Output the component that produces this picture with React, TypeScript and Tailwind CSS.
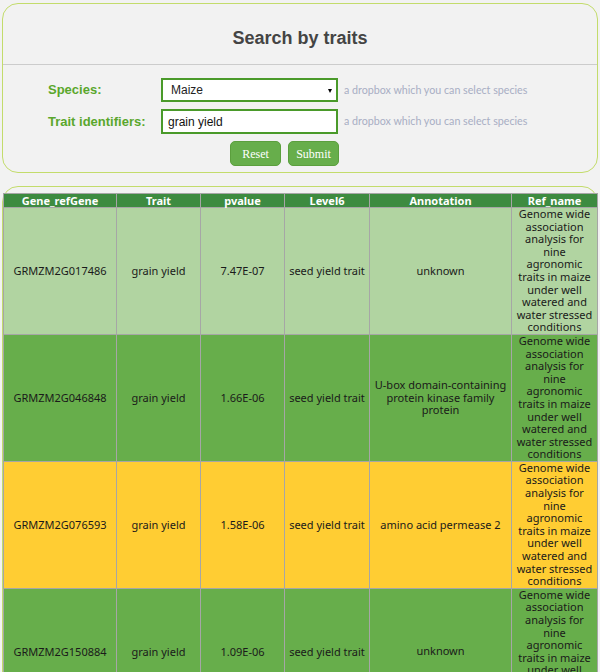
import React from 'react'

const refName = 'Genome wide association analysis for nine agronomic traits in maize under well watered and water stressed conditions'

const rows = [
  { gene: 'GRMZM2G017486', trait: 'grain yield', p: '7.47E-07', level: 'seed yield trait', ann: 'unknown', bg: 'bg-[#b1d4a1]' },
  { gene: 'GRMZM2G046848', trait: 'grain yield', p: '1.66E-06', level: 'seed yield trait', ann: 'U-box domain-containing protein kinase family protein', bg: 'bg-[#67ae4b]' },
  { gene: 'GRMZM2G076593', trait: 'grain yield', p: '1.58E-06', level: 'seed yield trait', ann: 'amino acid permease 2', bg: 'bg-[#ffcd33]' },
  { gene: 'GRMZM2G150884', trait: 'grain yield', p: '1.09E-06', level: 'seed yield trait', ann: 'unknown', bg: 'bg-[#67ae4b]' },
]

const heads = ['Gene_refGene', 'Trait', 'pvalue', 'Level6', 'Annotation', 'Ref_name']
const widths = ['w-[113px]', 'w-[84px]', 'w-[84px]', 'w-[85px]', 'w-[142px]', 'w-[86px]']

export default function App() {
  return (
    <div className="min-h-screen bg-[#f2f2f2] pt-[3px] px-[2px] font-['Liberation_Sans',Arial,sans-serif]">
      {/* search panel */}
      <div className="h-[170px] rounded-[16px] border border-[#c3dc6b] bg-[#f2f2f2]">
        <div className="h-[61px] border-b border-[#cccccc] flex items-center justify-center">
          <h1 className="text-[18px] font-bold text-[#444444] mt-[9px]">Search by traits</h1>
        </div>
        <div className="pt-[13px]">
          <div className="flex items-center h-[24px]">
            <div className="w-[158px] pl-[45px] text-[13px] font-bold text-[#5aa72c]">Species:</div>
            <div className="relative w-[177px] h-[24px] border-2 border-[#4a9a2a] bg-white flex items-center pl-[8px] text-[12px] text-[#222]">
              Maize
              <span className="absolute right-[4px] top-[9px] w-0 h-0 border-l-[2.5px] border-r-[2.5px] border-t-[4px] border-l-transparent border-r-transparent border-t-black" />
            </div>
            <span className="ml-[6px] text-[10.7px] text-[#a8aec4] font-['Lato',sans-serif]">a dropbox which you can select species</span>
          </div>
          <div className="flex items-center h-[25px] mt-[7px]">
            <div className="w-[158px] pl-[45px] text-[13px] font-bold text-[#5aa72c]">Trait identifiers:</div>
            <div className="w-[177px] h-[25px] border-2 border-[#4a9a2a] bg-white flex items-center pl-[5px] text-[12px] text-[#111]">
              grain yield
            </div>
            <span className="ml-[6px] text-[10.7px] text-[#a8aec4] font-['Lato',sans-serif]">a dropbox which you can select species</span>
          </div>
          <div className="flex gap-[7px] pl-[227px] mt-[7px]">
            <button className="w-[51px] h-[25px] rounded-[5px] border border-[#5b9f3d] bg-[#67ae4b] text-white text-[12px] font-['Liberation_Serif',serif]">Reset</button>
            <button className="w-[51px] h-[25px] rounded-[5px] border border-[#5b9f3d] bg-[#67ae4b] text-white text-[12px] font-['Liberation_Serif',serif]">Submit</button>
          </div>
        </div>
      </div>

      {/* results panel */}
      <div className="mt-[13px] rounded-t-[16px] border border-[#c3dc6b] bg-[#f2f2f2] pt-[6px]">
        <table className="w-[594px] border-collapse table-fixed font-['Noto_Sans',sans-serif] text-[11px] text-[#1a1a1a]">
          <thead>
            <tr className="bg-[#3d8b40]">
              {heads.map((h, i) => (
                <th key={h} className={`${widths[i]} h-[14px] leading-[13px] p-0 border border-[#a6a6a6] text-white font-bold`}>{h}</th>
              ))}
            </tr>
          </thead>
          <tbody>
            {rows.map(r => (
              <tr key={r.gene} className={r.bg}>
                <td className="border border-[#a6a6a6] text-center align-middle p-0">{r.gene}</td>
                <td className="border border-[#a6a6a6] text-center align-middle p-0">{r.trait}</td>
                <td className="border border-[#a6a6a6] text-center align-middle p-0">{r.p}</td>
                <td className="border border-[#a6a6a6] text-center align-middle p-0">{r.level}</td>
                <td className="border border-[#a6a6a6] text-center align-middle px-[2px] leading-[12.6px]">{r.ann}</td>
                <td className="border border-[#a6a6a6] text-center align-middle px-[2px] leading-[12.6px]">{refName}</td>
              </tr>
            ))}
          </tbody>
        </table>
      </div>
    </div>
  )
}
